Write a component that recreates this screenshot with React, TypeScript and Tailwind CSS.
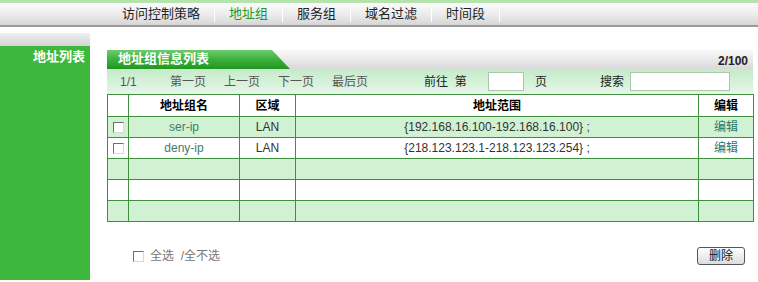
const menu = ['访问控制策略', '地址组', '服务组', '域名过滤', '时间段'];

const rows = [
  { name: 'ser-ip', zone: 'LAN', range: '{192.168.16.100-192.168.16.100} ;' },
  { name: 'deny-ip', zone: 'LAN', range: '{218.123.123.1-218.123.123.254} ;' },
  null,
  null,
  null,
];

function Box() {
  return (
    <span className="inline-block w-[11px] h-[11px] border border-[#6f6f6f] border-r-[#d8d8d8] border-b-[#d8d8d8] bg-white align-middle" />
  );
}

export default function App() {
  return (
    <div className="w-[758px] h-[282px] overflow-hidden bg-white text-[12px] text-[#333] font-['Liberation_Sans','Noto_Sans_CJK_SC',sans-serif]">
      <div className="h-[3px] bg-[#b4e4ac]" />
      <div className="h-[24px] bg-gradient-to-b from-[#fbfbfb] via-[#ededed] to-[#d6d6d6] border-b-2 border-[#9a9a9a] flex items-center pl-[108px]">
        {menu.map((m, i) => (
          <div key={m} className="flex items-center">
            <span className={`px-[14px] text-[13px] ${i === 1 ? 'text-[#1f9a1f]' : 'text-[#222]'}`}>{m}</span>
            <span className="w-px h-[16px] bg-[#c8c8c8] border-r border-white" />
          </div>
        ))}
      </div>

      <div className="flex mt-[6px] h-[247px]">
        <div className="w-[90px] flex flex-col">
          <div className="h-[13px] bg-gradient-to-b from-[#f0f0f0] to-[#d4d4d4]" />
          <div className="flex-1 bg-[#3db83d] text-right pr-[5px] pt-[1px] text-white font-bold text-[13px]">地址列表</div>
        </div>

        <div className="ml-[17px] w-[646px] pt-[17px]">
          <div className="relative h-[19px] bg-gradient-to-b from-[#fafafa] to-[#d9d9d9] flex items-end justify-end pr-[5px] pb-[1px]">
            <div className="absolute left-0 top-0 h-[19px] w-[183px] bg-gradient-to-b from-[#6ccc6c] via-[#3cb03c] to-[#1f961f] [clip-path:polygon(0_0,165px_0,100%_100%,0_100%)] text-white font-bold text-[13px] pl-[11px] leading-[18px]">
              地址组信息列表
            </div>
            <span className="font-bold text-[#222] leading-[14px]">2/100</span>
          </div>

          <div className="h-[25px] bg-gradient-to-b from-[#c4ebc9] to-[#e6f6e8] flex items-center text-[#555]">
            <span className="ml-[13px] w-[50px]">1/1</span>
            <span className="w-[54px]">第一页</span>
            <span className="w-[54px]">上一页</span>
            <span className="w-[54px]">下一页</span>
            <span className="w-[92px]">最后页</span>
            <span className="text-[#222] w-[64px]">前往&nbsp;&nbsp;第</span>
            <input className="w-[36px] h-[19px] bg-white border border-[#a8c8a8]" />
            <span className="text-[#222] ml-[11px] w-[65px]">页</span>
            <span className="text-[#222] w-[30px]">搜索</span>
            <input className="w-[100px] h-[19px] bg-white border border-[#a8c8a8]" />
          </div>

          <table className="w-[646px] border-collapse border border-[#3f8f3f] table-fixed">
            <colgroup>
              <col className="w-[21px]" />
              <col className="w-[111px]" />
              <col className="w-[56px]" />
              <col className="w-[403px]" />
              <col className="w-[55px]" />
            </colgroup>
            <thead>
              <tr className="h-[22px] bg-white font-bold text-[#000]">
                <th className="border border-[#3f8f3f]" />
                <th className="border border-[#3f8f3f]">地址组名</th>
                <th className="border border-[#3f8f3f]">区域</th>
                <th className="border border-[#3f8f3f]">地址范围</th>
                <th className="border border-[#3f8f3f]">编辑</th>
              </tr>
            </thead>
            <tbody>
              {rows.map((r, i) => (
                <tr key={i} className={`h-[21px] ${i % 2 === 0 ? 'bg-[#d0f2d3]' : 'bg-white'}`}>
                  <td className="border border-[#3f8f3f] text-center">{r && <Box />}</td>
                  <td className="border border-[#3f8f3f] text-center text-[#3d7d6d]">{r?.name}</td>
                  <td className="border border-[#3f8f3f] text-center text-[#333]">{r?.zone}</td>
                  <td className="border border-[#3f8f3f] text-center text-[#333]">{r?.range}</td>
                  <td className="border border-[#3f8f3f] text-center text-[#2a7a6a]">{r && '编辑'}</td>
                </tr>
              ))}
            </tbody>
          </table>

          <div className="flex items-center justify-between mt-[25px] pl-[26px] pr-[8px]">
            <div className="flex items-center gap-[6px] text-[#777]">
              <Box />
              <span>全选&nbsp;&nbsp;/全不选</span>
            </div>
            <button className="w-[48px] h-[18px] rounded-[3px] border border-[#555] bg-gradient-to-b from-white to-[#dcdcdc] text-[12px] text-[#111] leading-[15px]">
              删除
            </button>
          </div>
        </div>
      </div>
    </div>
  );
}
